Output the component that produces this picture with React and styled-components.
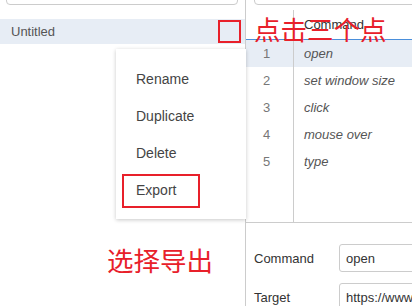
import styled, { createGlobalStyle } from "styled-components";

const GlobalStyle = createGlobalStyle`
  html, body {
    margin: 0;
    padding: 0;
    background: #fff;
  }
  body {
    font-family: "Liberation Sans", Arial, sans-serif;
    font-size: 13px;
    color: #333;
  }
`;

const Page = styled.div`
  position: relative;
  display: flex;
  width: 412px;
  height: 306px;
  overflow: hidden;
`;

const Sidebar = styled.div`
  width: 245px;
  flex: none;
  border-right: 1px solid #ccc;
  display: flex;
  flex-direction: column;
`;

const SearchBox = styled.div`
  flex: none;
  height: 28px;
  margin: -23px 7px 14px 6px;
  border: 1px solid #ccc;
  border-radius: 4px;
  box-sizing: border-box;
`;

const SuiteRow = styled.div`
  flex: none;
  display: flex;
  align-items: center;
  justify-content: space-between;
  height: 25px;
  padding: 0 4px 0 11px;
  background: #e7edf5;
  color: #555;
`;

const Marker = styled.div`
  width: 23px;
  height: 23px;
  box-sizing: border-box;
  border: 2px solid #e8202a;
`;

const Main = styled.div`
  flex: 1;
  display: flex;
  flex-direction: column;
  min-width: 0;
  overflow: hidden;
`;

const UrlBox = styled(SearchBox)`
  margin: -23px -10px 5px 8px;
`;

const Table = styled.div`
  flex: none;
  display: grid;
  grid-template-columns: 47px 1fr;
  grid-template-rows: 30px repeat(5, 27px) 1fr;
  border-bottom: 1px solid #ccc;
  height: 213px;
  box-sizing: border-box;
`;

const HeadCell = styled.div`
  display: flex;
  align-items: center;
  padding-left: 10px;
  border-bottom: 1px solid #4a8fdb;
  border-left: ${({ $divider }) => ($divider ? "1px solid #ccc" : "none")};
  color: #333;
`;

const NumCell = styled.div`
  display: flex;
  align-items: center;
  padding-left: 17px;
  color: #777;
  background: ${({ $active }) => ($active ? "#e7edf5" : "transparent")};
`;

const CmdCell = styled.div`
  display: flex;
  align-items: center;
  padding-left: 10px;
  font-style: italic;
  color: #555;
  border-left: 1px solid #ccc;
  background: ${({ $active }) => ($active ? "#e7edf5" : "transparent")};
`;

const Filler = styled.div`
  grid-column: 2;
  border-left: 1px solid #ccc;
`;

const Form = styled.div`
  flex: none;
  display: grid;
  grid-template-columns: 85px 1fr;
  row-gap: 11px;
  padding: 21px 0 0 8px;
  align-items: center;
`;

const Label = styled.div`
  color: #333;
`;

const Field = styled.div`
  height: 28px;
  box-sizing: border-box;
  border: 1px solid #ccc;
  border-radius: 3px;
  margin-right: -10px;
  padding-left: 6px;
  display: flex;
  align-items: center;
  white-space: nowrap;
  overflow: hidden;
  color: #333;
`;

const Menu = styled.div`
  position: absolute;
  left: 116px;
  top: 49px;
  width: 130px;
  height: 170px;
  box-sizing: border-box;
  padding: 11px 0 10px;
  background: #fff;
  box-shadow: 0 1px 4px rgba(0, 0, 0, 0.22);
`;

const MenuItem = styled.div`
  position: relative;
  height: 37px;
  display: flex;
  align-items: center;
  padding-left: 20px;
  font-size: 14px;
  color: #444;
`;

const ItemFrame = styled.div`
  position: absolute;
  left: 6px;
  top: 3px;
  width: 78px;
  height: 34px;
  box-sizing: border-box;
  border: 2px solid #e8202a;
`;

const Note = styled.div`
  position: absolute;
  left: ${({ $x }) => $x}px;
  top: ${({ $y }) => $y}px;
  font-family: "Noto Sans CJK SC", sans-serif;
  font-size: 26.5px;
  line-height: 30px;
  color: #e8202a;
  white-space: nowrap;
`;

const commands = ["open", "set window size", "click", "mouse over", "type"];
const menuItems = ["Rename", "Duplicate", "Delete", "Export"];

export default function App() {
  return (
    <>
      <GlobalStyle />
      <Page>
        <Sidebar>
          <SearchBox />
          <SuiteRow>
            <span>Untitled</span>
            <Marker />
          </SuiteRow>
        </Sidebar>

        <Main>
          <UrlBox />
          <Table>
            <HeadCell />
            <HeadCell $divider>Command</HeadCell>
            {commands.flatMap((cmd, i) => [
              <NumCell key={`n${i}`} $active={i === 0}>
                {i + 1}
              </NumCell>,
              <CmdCell key={`c${i}`} $active={i === 0}>
                {cmd}
              </CmdCell>,
            ])}
            <Filler />
          </Table>
          <Form>
            <Label>Command</Label>
            <Field>open</Field>
            <Label>Target</Label>
            <Field>https://www.baidu.com</Field>
          </Form>
        </Main>

        <Menu>
          {menuItems.map((item) => (
            <MenuItem key={item}>
              {item}
              {item === "Export" && <ItemFrame />}
            </MenuItem>
          ))}
        </Menu>

        <Note $x={254} $y={14}>点击三个点</Note>
        <Note $x={107} $y={245}>选择导出</Note>
      </Page>
    </>
  );
}
